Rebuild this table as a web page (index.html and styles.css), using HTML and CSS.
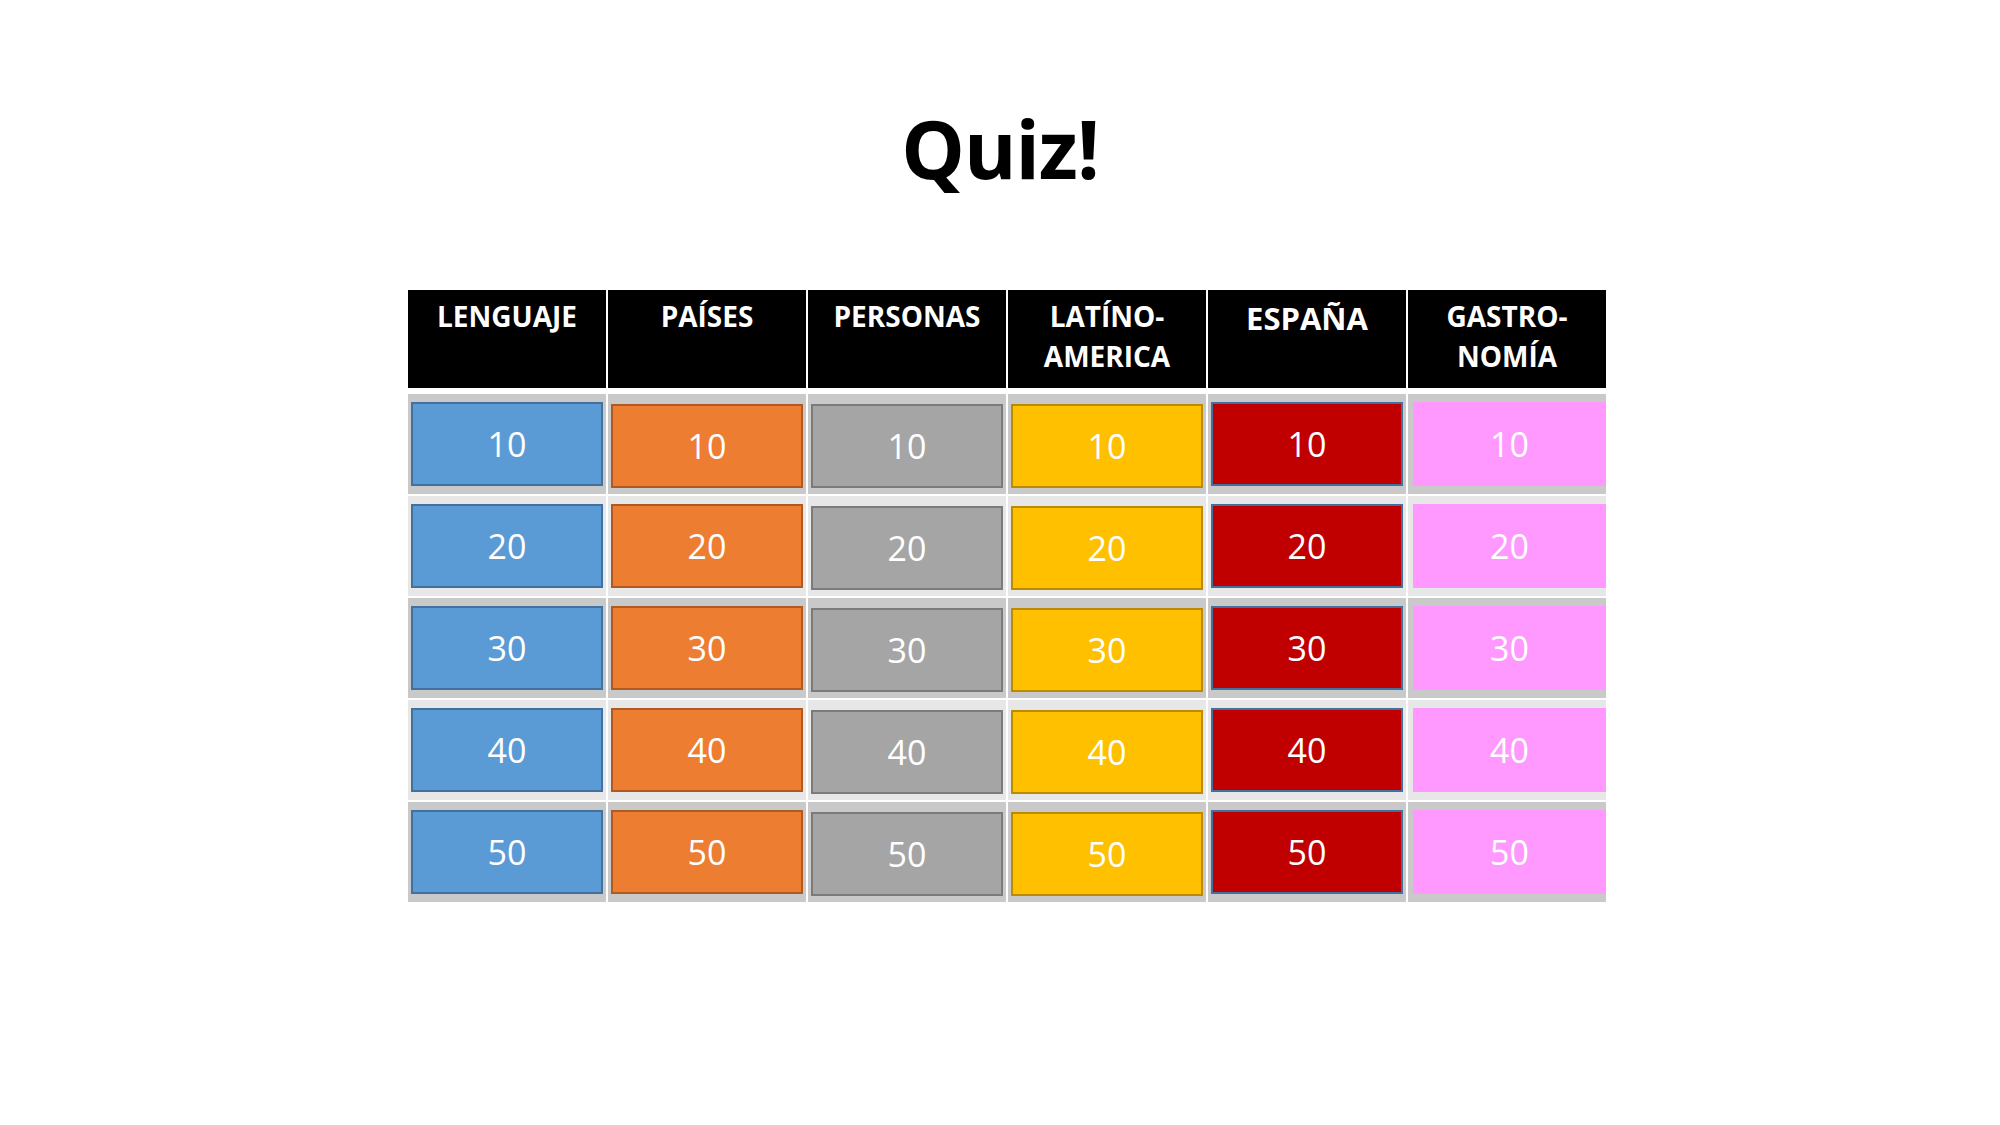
FILE: index.html
```html
<!DOCTYPE html>
<html lang="es">
<head>
<meta charset="utf-8">
<title>Quiz!</title>
<link rel="stylesheet" href="styles.css">
</head>
<body>
<main class="slide">
  <h1 class="title">Quiz!</h1>
  <div class="board">
    <div class="head">LENGUAJE</div>
    <div class="head">PAÍSES</div>
    <div class="head">PERSONAS</div>
    <div class="head">LATÍNO-<br>AMERICA</div>
    <div class="head head-big">ESPAÑA</div>
    <div class="head">GASTRO-<br>NOMÍA</div>

    <div class="cell dark first"><div class="tile blue">10</div></div>
    <div class="cell dark first"><div class="tile orange low">10</div></div>
    <div class="cell dark first"><div class="tile gray low">10</div></div>
    <div class="cell dark first"><div class="tile yellow low">10</div></div>
    <div class="cell dark first"><div class="tile red">10</div></div>
    <div class="cell dark first pink-cell"><div class="tile pink">10</div></div>

    <div class="cell light"><div class="tile blue">20</div></div>
    <div class="cell light"><div class="tile orange">20</div></div>
    <div class="cell light"><div class="tile gray low">20</div></div>
    <div class="cell light"><div class="tile yellow low">20</div></div>
    <div class="cell light"><div class="tile red">20</div></div>
    <div class="cell light pink-cell"><div class="tile pink">20</div></div>

    <div class="cell dark"><div class="tile blue">30</div></div>
    <div class="cell dark"><div class="tile orange">30</div></div>
    <div class="cell dark"><div class="tile gray low">30</div></div>
    <div class="cell dark"><div class="tile yellow low">30</div></div>
    <div class="cell dark"><div class="tile red">30</div></div>
    <div class="cell dark pink-cell"><div class="tile pink">30</div></div>

    <div class="cell light"><div class="tile blue">40</div></div>
    <div class="cell light"><div class="tile orange">40</div></div>
    <div class="cell light"><div class="tile gray low">40</div></div>
    <div class="cell light"><div class="tile yellow low">40</div></div>
    <div class="cell light"><div class="tile red">40</div></div>
    <div class="cell light pink-cell"><div class="tile pink">40</div></div>

    <div class="cell dark"><div class="tile blue">50</div></div>
    <div class="cell dark"><div class="tile orange">50</div></div>
    <div class="cell dark"><div class="tile gray low">50</div></div>
    <div class="cell dark"><div class="tile yellow low">50</div></div>
    <div class="cell dark"><div class="tile red">50</div></div>
    <div class="cell dark pink-cell"><div class="tile pink">50</div></div>
  </div>
</main>
</body>
</html>
```

FILE: styles.css
```css
html, body {
  margin: 0;
  padding: 0;
  background: #ffffff;
}

.slide {
  width: 2000px;
  height: 1125px;
  display: flex;
  flex-direction: column;
  align-items: center;
  font-family: "Open Sans", "Liberation Sans", sans-serif;
}

.title {
  margin: 98px 0 0 0;
  font-size: 80px;
  font-weight: 700;
  line-height: 100px;
  color: #000000;
  letter-spacing: -1px;
}

.board {
  margin-top: 92px;
  margin-left: 14px;
  display: grid;
  grid-template-columns: repeat(6, 198px);
  grid-template-rows: 98px 104px repeat(4, 100px);
  column-gap: 2px;
  row-gap: 2px;
}

.head {
  background: #000000;
  color: #ffffff;
  font-weight: 700;
  font-size: 28px;
  line-height: 40px;
  text-align: center;
  padding-top: 6px;
  box-sizing: border-box;
}

.head-big {
  font-size: 31px;
  padding-top: 8px;
}

.cell {
  padding: 8px 3px;
  box-sizing: border-box;
}

.first {
  margin-top: 4px;
}

.dark {
  background: #c9c9c9;
}

.light {
  background: #e7e7e7;
}

.pink-cell {
  padding: 8px 0 8px 5px;
}

.tile {
  height: 84px;
  box-sizing: border-box;
  display: flex;
  align-items: center;
  justify-content: center;
  color: #ffffff;
  font-size: 34px;
  border: 2px solid transparent;
}

.low {
  transform: translateY(2px);
}

.blue {
  background: #5b9bd5;
  border-color: #41719c;
}

.orange {
  background: #ed7d31;
  border-color: #ae5a21;
}

.gray {
  background: #a5a5a5;
  border-color: #7b7b7b;
}

.yellow {
  background: #ffc000;
  border-color: #bc8c00;
}

.red {
  background: #c00000;
  border-color: #41719c;
}

.pink {
  background: #ff99ff;
  border: none;
}
```
